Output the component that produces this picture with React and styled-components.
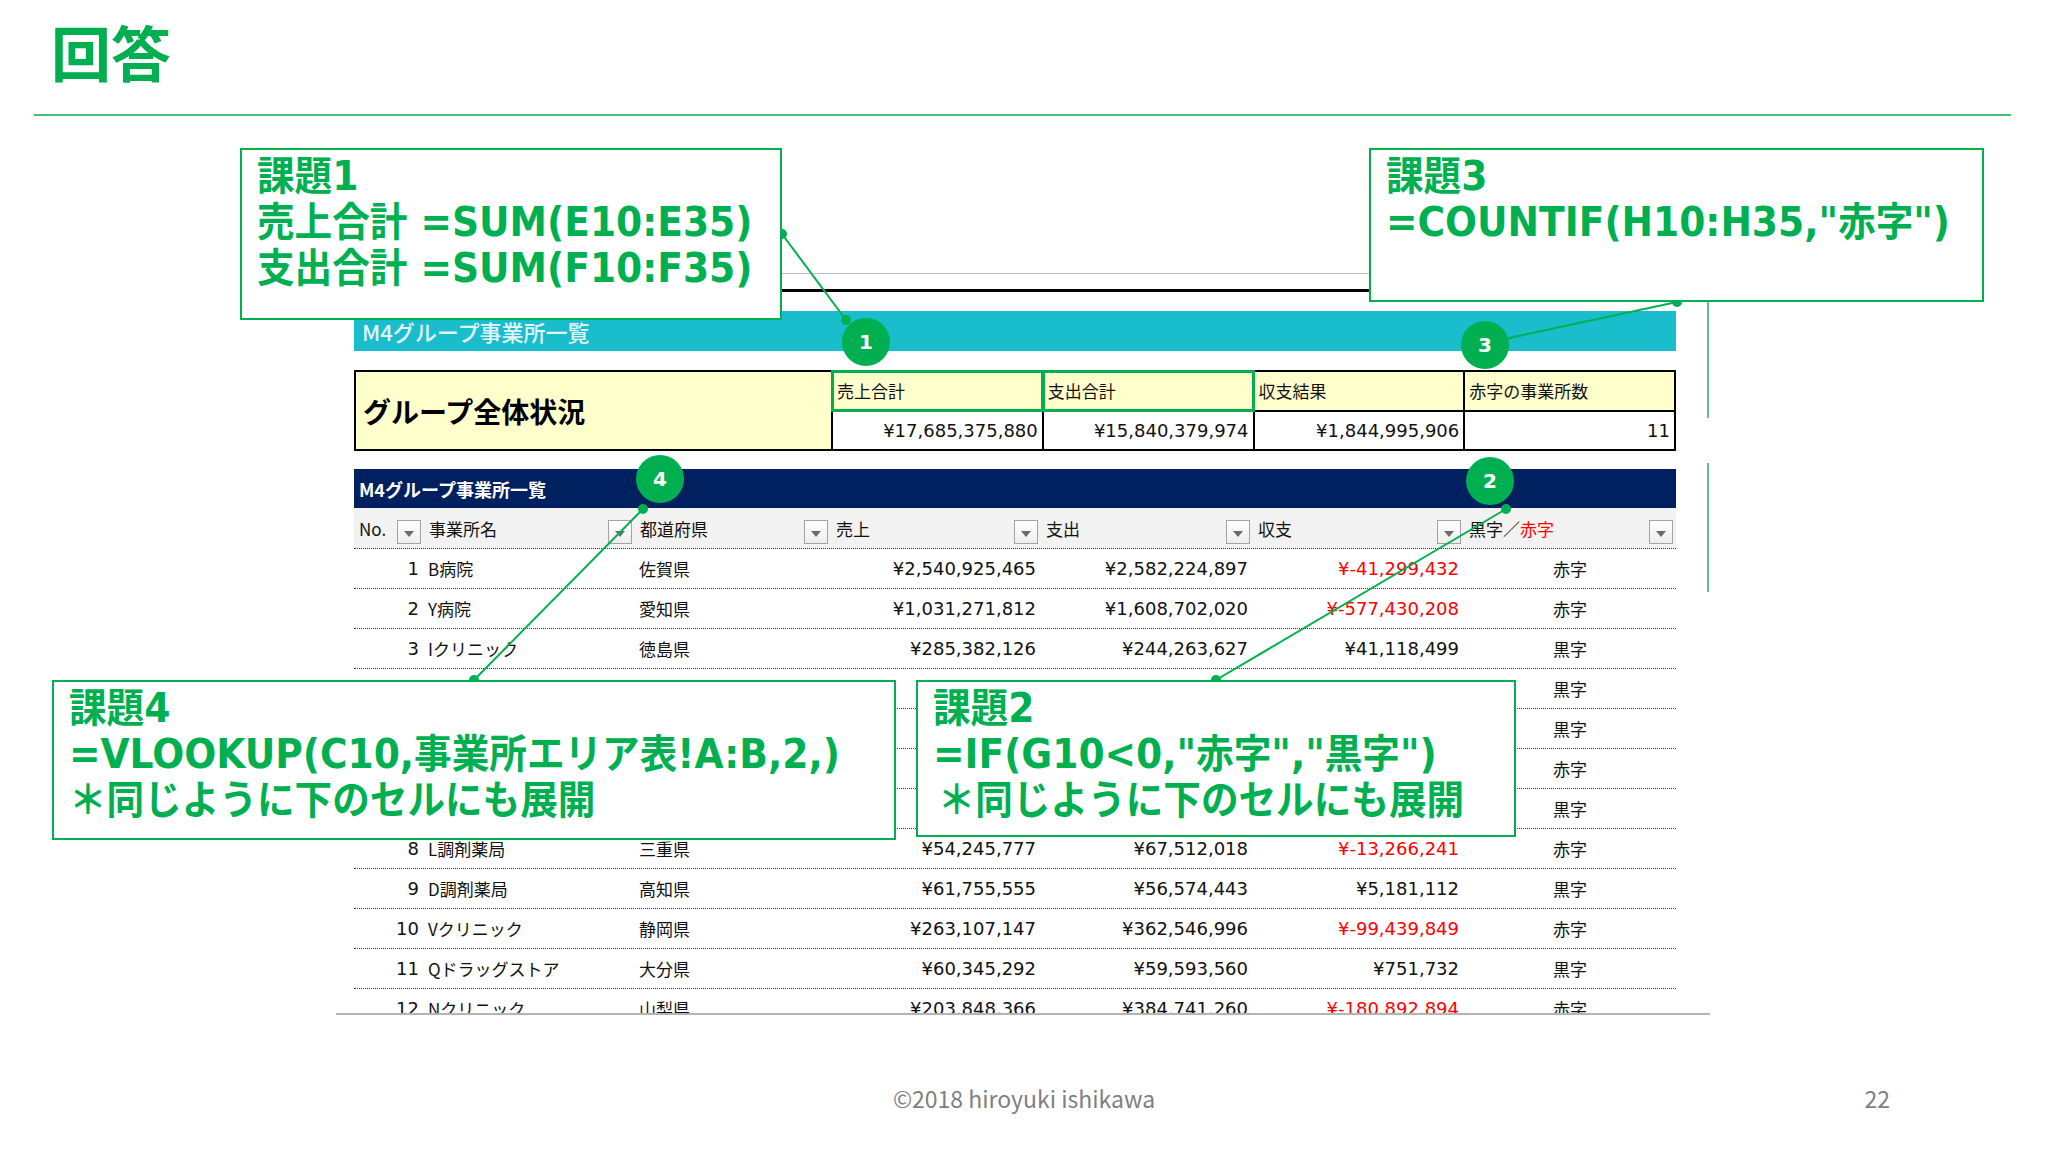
import React from "react";
import styled, { createGlobalStyle } from "styled-components";

const GREEN = "#00B050";

const Global = createGlobalStyle`
  html, body { margin: 0; padding: 0; background: #fff; }
  body { font-family: "Noto Sans CJK JP", sans-serif; }
`;

const Slide = styled.div`
  position: relative;
  width: 2048px;
  height: 1152px;
  overflow: hidden;
  display: flex;
  flex-direction: column;
  background: #fff;
`;

const Header = styled.header`
  margin: 0 37px 0 34px;
  height: 116px;
  box-sizing: border-box;
  padding: 16px 0 0 17px;
  border-bottom: 2px solid #45c07a;
`;

const Title = styled.h1`
  margin: 0;
  font-family: "Noto Sans CJK JP", sans-serif;
  font-weight: 700;
  font-size: 60px;
  line-height: 70px;
  color: ${GREEN};
`;

const SheetClip = styled.section`
  margin: 157px 0 0 336px;
  width: 1374px;
  height: 742px;
  box-sizing: border-box;
  padding: 0 34px 0 18px;
  overflow: hidden;
  border-bottom: 2px solid #b4b4b4;
  font-family: "DejaVu Sans", "Noto Sans CJK JP", sans-serif;
  color: #111;
`;

const Rule = styled.div`
  height: ${(p) => p.$h}px;
  margin-top: ${(p) => p.$mt}px;
  background: ${(p) => p.$c};
`;

const Band = styled.div`
  margin-top: ${(p) => p.$mt}px;
  height: ${(p) => p.$h}px;
  background: ${(p) => p.$bg};
  display: flex;
  align-items: center;
  padding-left: ${(p) => p.$pl}px;
  color: ${(p) => p.$fg};
  font-family: "Noto Sans CJK JP", sans-serif;
  font-size: ${(p) => p.$fs}px;
  font-weight: ${(p) => p.$fw};
  box-sizing: border-box;
`;

const Summary = styled.div`
  margin-top: 19px;
  display: grid;
  grid-template-columns: 475px repeat(4, 1fr);
  grid-template-rows: 37.5px 37.5px;
  gap: 2px;
  padding: 2px;
  background: #000;
`;

const SummaryTitle = styled.div`
  grid-row: 1 / span 2;
  background: #ffffcc;
  display: flex;
  align-items: center;
  padding-left: 7px;
  font-family: "Noto Sans CJK JP", sans-serif;
  font-weight: 700;
  font-size: 28px;
  color: #000;
`;

const SummaryHead = styled.div`
  background: #ffffcc;
  display: flex;
  align-items: center;
  padding-left: 4px;
  font-family: "Noto Sans CJK JP", sans-serif;
  font-size: 17px;
  position: relative;
  ${(p) =>
    p.$hl &&
    `outline: 3px solid ${GREEN}; outline-offset: -1px; z-index: 1;`}
`;

const SummaryValue = styled.div`
  background: #fff;
  display: flex;
  align-items: center;
  justify-content: flex-end;
  padding-right: 4px;
  font-size: 18px;
`;

const COLS = "70px 211px 196px 210px 212px 211px 212px";

const HeadRow = styled.div`
  display: grid;
  grid-template-columns: ${COLS};
  height: 41px;
  box-sizing: border-box;
  background: #f2f2f2;
  border-bottom: 1px dotted #333;
`;

const HeadCell = styled.div`
  display: flex;
  align-items: center;
  padding: 0 3px 0 5px;
  font-family: "Noto Sans CJK JP", sans-serif;
  font-size: 17px;
  white-space: nowrap;
`;

const Red = styled.span`
  color: #ff0000;
`;

const FilterBtn = styled.span`
  margin-left: auto;
  align-self: flex-end;
  margin-bottom: 4px;
  width: 24px;
  height: 24px;
  box-sizing: border-box;
  border: 1px solid #a3a3a3;
  background: linear-gradient(#ffffff, #eeeeee);
  display: flex;
  align-items: center;
  justify-content: center;
  &::after {
    content: "";
    border-left: 5px solid transparent;
    border-right: 5px solid transparent;
    border-top: 6px solid #6b6b6b;
    margin-top: 4px;
  }
`;

const Row = styled.div`
  display: grid;
  grid-template-columns: ${COLS};
  height: 40px;
  box-sizing: border-box;
  border-bottom: 1px dotted #333;
  align-items: center;
  font-size: 18px;
  white-space: nowrap;
`;

const Cell = styled.div`
  padding: 0 ${(p) => (p.$align === "right" ? 5 : 4)}px 0 4px;
  text-align: ${(p) => p.$align || "left"};
  color: ${(p) => (p.$neg ? "#ff0000" : "#111")};
  font-family: ${(p) =>
    p.$cjk
      ? '"Noto Sans CJK JP", sans-serif'
      : '"DejaVu Sans", "Noto Sans CJK JP", sans-serif'};
  font-size: ${(p) => (p.$cjk ? 17 : 18)}px;
  overflow: hidden;
`;

const Footer = styled.footer`
  margin-top: 63px;
  height: 40px;
  display: grid;
  grid-template-columns: 1fr auto 1fr;
  align-items: center;
  font-family: "Noto Sans CJK JP", sans-serif;
  font-size: 23px;
  color: #7f7f7f;
`;

const Copy = styled.div`
  grid-column: 2;
`;

const PageNo = styled.div`
  grid-column: 3;
  justify-self: end;
  padding-right: 158px;
`;

const Overlay = styled.svg`
  position: absolute;
  left: 0;
  top: 0;
  width: 2048px;
  height: 1152px;
  pointer-events: none;
`;

const Badge = styled.div`
  position: absolute;
  left: ${(p) => p.$x - 24}px;
  top: ${(p) => p.$y - 24}px;
  width: 48px;
  height: 48px;
  border-radius: 50%;
  background: ${GREEN};
  color: #fff;
  display: flex;
  align-items: center;
  justify-content: center;
  font-family: "DejaVu Sans", sans-serif;
  font-weight: 700;
  font-size: 20px;
`;

const Callout = styled.div`
  position: absolute;
  left: ${(p) => p.$x}px;
  top: ${(p) => p.$y}px;
  width: ${(p) => p.$w}px;
  height: ${(p) => p.$h}px;
  box-sizing: border-box;
  border: 2px solid ${GREEN};
  background: #fff;
  padding: 3px 0 0 15px;
  overflow: hidden;
`;

const CalloutLine = styled.div`
  font-family: "DejaVu Sans", "Noto Sans CJK JP", sans-serif;
  font-weight: 700;
  font-size: 40px;
  line-height: 46px;
  color: ${GREEN};
  white-space: pre;
  padding-left: ${(p) => p.$indent || 0}px;
  transform: scaleX(0.94);
  transform-origin: left top;
`;

const rows = [
  [1, "B病院", "佐賀県", "¥2,540,925,465", "¥2,582,224,897", "¥-41,299,432", "赤字"],
  [2, "Y病院", "愛知県", "¥1,031,271,812", "¥1,608,702,020", "¥-577,430,208", "赤字"],
  [3, "Iクリニック", "徳島県", "¥285,382,126", "¥244,263,627", "¥41,118,499", "黒字"],
  [4, "Kクリニック", "福岡県", "¥98,455,210", "¥76,320,118", "¥22,135,092", "黒字"],
  [5, "R病院", "岐阜県", "¥81,604,377", "¥59,218,540", "¥22,385,837", "黒字"],
  [6, "Mクリニック", "長野県", "¥54,903,268", "¥71,447,905", "¥-16,544,637", "赤字"],
  [7, "S調剤薬局", "香川県", "¥73,518,044", "¥69,210,377", "¥4,307,667", "黒字"],
  [8, "L調剤薬局", "三重県", "¥54,245,777", "¥67,512,018", "¥-13,266,241", "赤字"],
  [9, "D調剤薬局", "高知県", "¥61,755,555", "¥56,574,443", "¥5,181,112", "黒字"],
  [10, "Vクリニック", "静岡県", "¥263,107,147", "¥362,546,996", "¥-99,439,849", "赤字"],
  [11, "Qドラッグストア", "大分県", "¥60,345,292", "¥59,593,560", "¥751,732", "黒字"],
  [12, "Nクリニック", "山梨県", "¥203,848,366", "¥384,741,260", "¥-180,892,894", "赤字"],
];

const heads = ["No.", "事業所名", "都道府県", "売上", "支出", "収支"];

const Dot = ({ x, y }) => <circle cx={x} cy={y} r="5" fill={GREEN} />;

export default function App() {
  return (
    <>
      <Global />
      <Slide>
        <Header>
          <Title>回答</Title>
        </Header>

        <SheetClip>
          <Rule $h={1} $mt={0} $c="#bdbdbd" />
          <Rule $h={3} $mt={15} $c="#000" />
          <Band $mt={19} $h={40} $bg="#19bdcb" $fg="#e2f6f8" $fs={22} $fw={500} $pl={8}>
            M4グループ事業所一覧
          </Band>
          <Summary>
            <SummaryTitle>グループ全体状況</SummaryTitle>
            <SummaryHead $hl>売上合計</SummaryHead>
            <SummaryHead $hl>支出合計</SummaryHead>
            <SummaryHead>収支結果</SummaryHead>
            <SummaryHead>赤字の事業所数</SummaryHead>
            <SummaryValue>¥17,685,375,880</SummaryValue>
            <SummaryValue>¥15,840,379,974</SummaryValue>
            <SummaryValue>¥1,844,995,906</SummaryValue>
            <SummaryValue>11</SummaryValue>
          </Summary>
          <Band $mt={18} $h={39} $bg="#002060" $fg="#ffffff" $fs={18} $fw={700} $pl={5}>
            M4グループ事業所一覧
          </Band>
          <HeadRow>
            {heads.map((h) => (
              <HeadCell key={h}>
                {h}
                <FilterBtn />
              </HeadCell>
            ))}
            <HeadCell>
              黒字／<Red>赤字</Red>
              <FilterBtn />
            </HeadCell>
          </HeadRow>
          {rows.map((r) => (
            <Row key={r[0]}>
              <Cell $align="right">{r[0]}</Cell>
              <Cell $cjk>{r[1]}</Cell>
              <Cell $cjk>{r[2]}</Cell>
              <Cell $align="right">{r[3]}</Cell>
              <Cell $align="right">{r[4]}</Cell>
              <Cell $align="right" $neg={r[5].includes("-")}>
                {r[5]}
              </Cell>
              <Cell $align="center" $cjk>
                {r[6]}
              </Cell>
            </Row>
          ))}
        </SheetClip>

        <Footer>
          <Copy>©2018 hiroyuki ishikawa</Copy>
          <PageNo>22</PageNo>
        </Footer>

        <Overlay viewBox="0 0 2048 1152">
          <g stroke={GREEN} strokeWidth="2" fill="none">
            <line x1="782" y1="234" x2="846" y2="320" />
            <line x1="1677" y1="302" x2="1500" y2="340" />
            <line x1="474" y1="680" x2="643" y2="509" />
            <line x1="1216" y1="680" x2="1506" y2="509" />
            <line x1="1708" y1="302" x2="1708" y2="418" stroke="#5cbf85" />
            <line x1="1708" y1="463" x2="1708" y2="592" stroke="#5cbf85" />
          </g>
          <Dot x={782} y={234} />
          <Dot x={846} y={320} />
          <Dot x={1677} y={302} />
          <Dot x={474} y={680} />
          <Dot x={643} y={509} />
          <Dot x={1216} y={680} />
          <Dot x={1506} y={509} />
        </Overlay>

        <Badge $x={866} $y={342}>1</Badge>
        <Badge $x={1485} $y={345}>3</Badge>
        <Badge $x={660} $y={479}>4</Badge>
        <Badge $x={1490} $y={481}>2</Badge>

        <Callout $x={240} $y={148} $w={542} $h={172}>
          <CalloutLine>課題1</CalloutLine>
          <CalloutLine>売上合計 =SUM(E10:E35)</CalloutLine>
          <CalloutLine>支出合計 =SUM(F10:F35)</CalloutLine>
        </Callout>

        <Callout $x={1369} $y={148} $w={615} $h={154}>
          <CalloutLine>課題3</CalloutLine>
          <CalloutLine>=COUNTIF(H10:H35,"赤字")</CalloutLine>
        </Callout>

        <Callout $x={52} $y={680} $w={844} $h={160}>
          <CalloutLine>課題4</CalloutLine>
          <CalloutLine>=VLOOKUP(C10,事業所エリア表!A:B,2,)</CalloutLine>
          <CalloutLine>＊同じように下のセルにも展開</CalloutLine>
        </Callout>

        <Callout $x={916} $y={680} $w={600} $h={157}>
          <CalloutLine>課題2</CalloutLine>
          <CalloutLine>=IF(G10&lt;0,"赤字","黒字")</CalloutLine>
          <CalloutLine $indent={5}>＊同じように下のセルにも展開</CalloutLine>
        </Callout>
      </Slide>
    </>
  );
}
